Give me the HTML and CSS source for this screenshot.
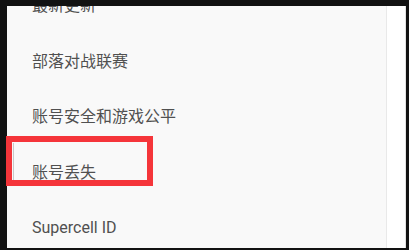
FILE: index.html
```html
<!DOCTYPE html>
<html lang="zh">
<head>
<meta charset="utf-8">
<link rel="stylesheet" href="styles.css">
</head>
<body>
<div class="frame">
  <div class="panel">
    <ul class="list">
      <li class="row">最新更新</li>
      <li class="row">部落对战联赛</li>
      <li class="row">账号安全和游戏公平</li>
      <li class="row">账号丢失</li>
      <li class="row latin">Supercell ID</li>
    </ul>
  </div>
  <div class="edge"></div>
  <div class="strip"></div>
  <div class="strip-line"></div>
</div>
<div class="highlight"><span class="caret"></span></div>
</body>
</html>
```
FILE: styles.css
```css
html, body {
  margin: 0;
  padding: 0;
  width: 409px;
  height: 250px;
  overflow: hidden;
  background: #121212;
}
body {
  position: relative;
  font-family: Roboto, "Noto Sans CJK SC", "Noto Sans", sans-serif;
}
.frame {
  display: flex;
  height: 242px;
  padding: 6px 3px 2px 7px;
}
.panel {
  width: 379px;
  background: #f9f9f9;
  overflow: hidden;
}
.edge {
  width: 1px;
  background: #e9e9e9;
}
.strip {
  width: 18px;
  background: #ffffff;
}
.strip-line {
  width: 1px;
  background: #e2e2e2;
}
.list {
  list-style: none;
  margin: -27.5px 0 0 0;
  padding: 0;
}
.row {
  height: 55.5px;
  display: flex;
  align-items: center;
  padding-left: 25px;
  font-size: 16px;
  color: #505050;
  line-height: 1;
}
.highlight {
  position: absolute;
  left: 6px;
  top: 136px;
  width: 135px;
  height: 38px;
  border: 6px solid #f5353a;
}
.caret {
  position: absolute;
  left: 1px;
  top: 1px;
  width: 1px;
  height: 37px;
  background: #c8c8c8;
}
```
